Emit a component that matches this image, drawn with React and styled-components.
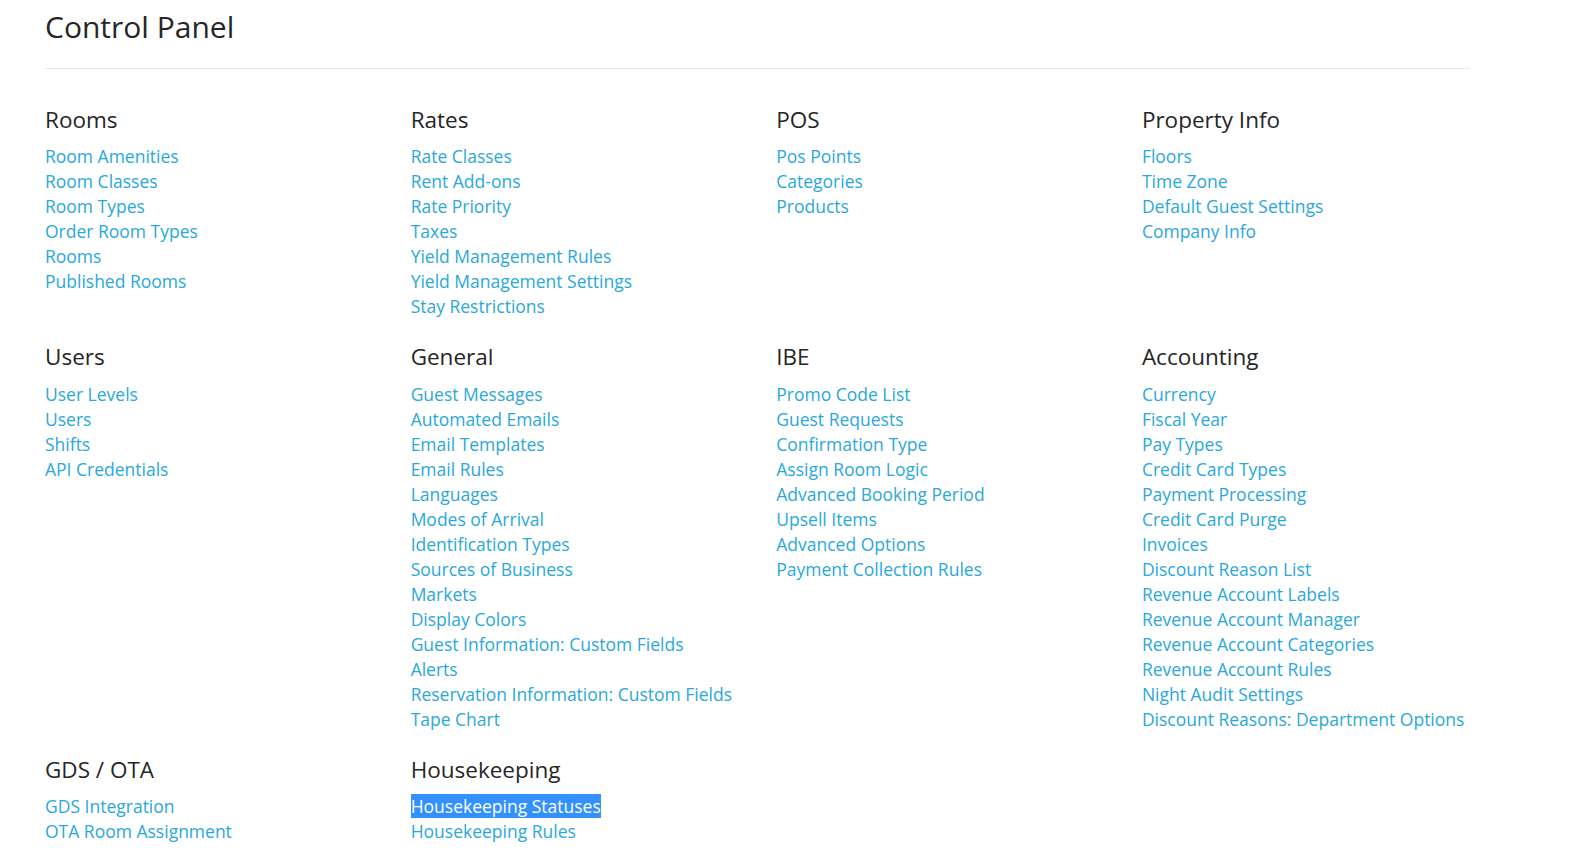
import React from "react";
import styled, { createGlobalStyle } from "styled-components";

const sections = [
  {
    title: "Rooms",
    links: ["Room Amenities", "Room Classes", "Room Types", "Order Room Types", "Rooms", "Published Rooms"],
  },
  {
    title: "Rates",
    links: [
      "Rate Classes",
      "Rent Add-ons",
      "Rate Priority",
      "Taxes",
      "Yield Management Rules",
      "Yield Management Settings",
      "Stay Restrictions",
    ],
  },
  {
    title: "POS",
    links: ["Pos Points", "Categories", "Products"],
  },
  {
    title: "Property Info",
    links: ["Floors", "Time Zone", "Default Guest Settings", "Company Info"],
  },
  {
    title: "Users",
    links: ["User Levels", "Users", "Shifts", "API Credentials"],
  },
  {
    title: "General",
    links: [
      "Guest Messages",
      "Automated Emails",
      "Email Templates",
      "Email Rules",
      "Languages",
      "Modes of Arrival",
      "Identification Types",
      "Sources of Business",
      "Markets",
      "Display Colors",
      "Guest Information: Custom Fields",
      "Alerts",
      "Reservation Information: Custom Fields",
      "Tape Chart",
    ],
  },
  {
    title: "IBE",
    links: [
      "Promo Code List",
      "Guest Requests",
      "Confirmation Type",
      "Assign Room Logic",
      "Advanced Booking Period",
      "Upsell Items",
      "Advanced Options",
      "Payment Collection Rules",
    ],
  },
  {
    title: "Accounting",
    links: [
      "Currency",
      "Fiscal Year",
      "Pay Types",
      "Credit Card Types",
      "Payment Processing",
      "Credit Card Purge",
      "Invoices",
      "Discount Reason List",
      "Revenue Account Labels",
      "Revenue Account Manager",
      "Revenue Account Categories",
      "Revenue Account Rules",
      "Night Audit Settings",
      "Discount Reasons: Department Options",
    ],
  },
  {
    title: "GDS / OTA",
    links: ["GDS Integration", "OTA Room Assignment"],
  },
  {
    title: "Housekeeping",
    links: ["Housekeeping Statuses", "Housekeeping Rules"],
  },
];

// the one link that shows up highlighted in the screenshot
const SELECTED = "Housekeeping Statuses";

const GlobalStyle = createGlobalStyle`
  body {
    margin: 0;
    background: #fff;
    font-family: "Open Sans", "Liberation Sans", sans-serif;
  }
`;

const Page = styled.div`
  width: 1425px;
  padding: 0 0 40px 45px;
`;

const Title = styled.h1`
  margin: 9px 0 0;
  font-size: 30px;
  line-height: 36px;
  font-weight: 400;
  color: #262626;
`;

const Divider = styled.hr`
  margin: 23px 0 0;
  border: 0;
  border-top: 1px solid #e6e6e6;
  height: 0;
`;

const Grid = styled.div`
  display: grid;
  grid-template-columns: repeat(4, 1fr);
  column-gap: 37.5px;
  row-gap: 24px;
  margin-top: 37px;
`;

const Section = styled.section`
  display: flex;
  flex-direction: column;
`;

const Heading = styled.h4`
  margin: 0 0 11.3px;
  font-size: 22.5px;
  line-height: 27px;
  font-weight: 400;
  color: #262626;
`;

const LinkList = styled.ul`
  list-style: none;
  margin: 0;
  padding: 0;
`;

const Item = styled.li`
  font-size: 17.5px;
  line-height: 25px;
  white-space: nowrap;
`;

const Link = styled.a`
  color: ${({ $selected }) => ($selected ? "#fff" : "#2aa8dc")};
  background: ${({ $selected }) => ($selected ? "#3390ff" : "transparent")};
  text-decoration: none;
  cursor: pointer;
`;

const App = () => {
  return (
    <>
      <GlobalStyle />
      <Page>
        <Title>Control Panel</Title>
        <Divider />
        <Grid>
          {sections.map((section) => (
            <Section key={section.title}>
              <Heading>{section.title}</Heading>
              <LinkList>
                {section.links.map((link) => (
                  <Item key={link}>
                    <Link href="#" $selected={link === SELECTED}>
                      {link}
                    </Link>
                  </Item>
                ))}
              </LinkList>
            </Section>
          ))}
        </Grid>
      </Page>
    </>
  );
};

export default App;
